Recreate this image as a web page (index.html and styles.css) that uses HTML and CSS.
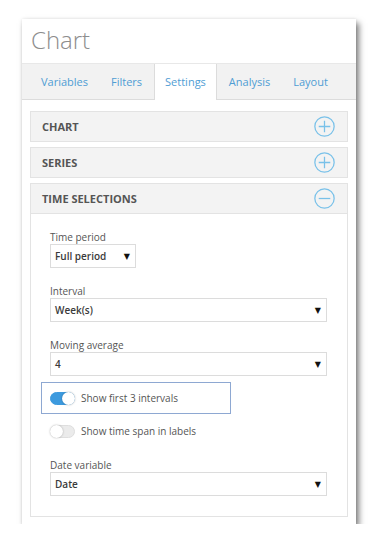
FILE: index.html
```html
<!DOCTYPE html>
<html lang="en">
<head>
    <meta charset="UTF-8">
    <meta name="viewport" content="width=device-width, initial-scale=1.0">
    <title>Chart</title>
    <link rel="stylesheet" href="styles.css">
</head>
<body>
    <div class="panel">
        <h1 class="title">Chart</h1>

        <!-- Tabs -->
        <div class="tabs">
            <div class="tab">Variables</div>
            <div class="tab">Filters</div>
            <div class="tab active">Settings</div>
            <div class="tab">Analysis</div>
            <div class="tab">Layout</div>
        </div>

        <div class="sections">
            <div class="section-head">
                <span>CHART</span>
                <svg class="toggle-icon" viewBox="0 0 20 20">
                    <circle cx="10" cy="10" r="9.2"/>
                    <path d="M10 4.5 V15.5 M4.5 10 H15.5"/>
                </svg>
            </div>
            <div class="section-head">
                <span>SERIES</span>
                <svg class="toggle-icon" viewBox="0 0 20 20">
                    <circle cx="10" cy="10" r="9.2"/>
                    <path d="M10 4.5 V15.5 M4.5 10 H15.5"/>
                </svg>
            </div>
            <div class="section-head open">
                <span>TIME SELECTIONS</span>
                <svg class="toggle-icon" viewBox="0 0 20 20">
                    <circle cx="10" cy="10" r="9.2"/>
                    <path d="M4.5 10 H15.5"/>
                </svg>
            </div>

            <div class="section-body">
                <div class="field">
                    <div class="label">Time period</div>
                    <div class="select short"><span>Full period</span><span class="arrow">&#9660;</span></div>
                </div>
                <div class="field">
                    <div class="label">Interval</div>
                    <div class="select"><span>Week(s)</span><span class="arrow">&#9660;</span></div>
                </div>
                <div class="field">
                    <div class="label">Moving average</div>
                    <div class="select"><span>4</span><span class="arrow">&#9660;</span></div>
                </div>

                <div class="switch-row highlight">
                    <span class="switch on"></span>
                    <span>Show first 3 intervals</span>
                </div>
                <div class="switch-row">
                    <span class="switch"></span>
                    <span>Show time span in labels</span>
                </div>

                <div class="field date">
                    <div class="label">Date variable</div>
                    <div class="select"><span>Date</span><span class="arrow">&#9660;</span></div>
                </div>
            </div>
        </div>
    </div>
</body>
</html>
```

FILE: styles.css
```css
body {
    margin: 0;
    font-family: "Open Sans", Arial, sans-serif;
    background-color: #fff;
}
.panel {
    margin: 19px 0 0 22px;
    width: 334px;
    padding-bottom: 7px;
    background-color: #fff;
    box-shadow: 3px 4px 6px rgba(0,0,0,0.5), 0 0 3px rgba(0,0,0,0.1);
}
.title {
    margin: 0;
    padding: 3px 9px 5px;
    font-size: 24px;
    line-height: 36px;
    font-weight: 300;
    color: #8d8d8d;
}
.tabs {
    display: flex;
    height: 35px;
    padding-left: 7.5px;
    background-color: #f2f2f2;
    border-top: 1px solid #e8e8e8;
    border-bottom: 1px solid #dcdcdc;
}
.tab {
    padding: 0 10.5px;
    font-size: 11px;
    line-height: 36px;
    color: #4f9dd4;
    border-left: 1px solid transparent;
    border-right: 1px solid transparent;
}
.tab.active {
    height: 36px;
    background-color: #fff;
    border-color: #dcdcdc;
}
.sections {
    padding: 11px 8px 0;
}
.section-head {
    display: flex;
    align-items: center;
    justify-content: space-between;
    box-sizing: border-box;
    height: 31px;
    margin-bottom: 5px;
    padding: 0 12px 0 11px;
    background-color: #f3f3f3;
    border: 1px solid #e3e3e3;
    font-size: 11px;
    font-weight: 700;
    color: #555;
}
.section-head.open {
    margin-bottom: 0;
}
.toggle-icon {
    width: 21px;
    height: 21px;
    fill: none;
    stroke: #79c1e9;
    stroke-width: 1.2;
}
.section-body {
    padding: 16px 20px 20px 19px;
    border: 1px solid #e3e3e3;
    border-top: 0;
}
.field + .field {
    margin-top: 16px;
}
.label {
    font-size: 10px;
    line-height: 14px;
    color: #555;
}
.select {
    display: flex;
    align-items: center;
    justify-content: space-between;
    box-sizing: border-box;
    height: 24px;
    padding: 0 5px 0 4px;
    border: 1px solid #dcdcdc;
    font-size: 10px;
    font-weight: 600;
    color: #3a3a3a;
}
.select.short {
    width: 86px;
}
.arrow {
    font-family: "DejaVu Sans", sans-serif;
    font-size: 8px;
    color: #111;
}
.switch-row {
    display: flex;
    align-items: center;
    gap: 6px;
    box-sizing: border-box;
    width: 190px;
    height: 32px;
    margin-left: -9px;
    padding-left: 8px;
    border: 1px solid transparent;
    font-size: 10px;
    color: #555;
}
.switch-row.highlight {
    margin-top: 6px;
    margin-bottom: 1px;
    border: 1.5px solid #8ea8d2;
}
.switch {
    position: relative;
    box-sizing: border-box;
    width: 25px;
    height: 13px;
    border-radius: 7px;
    background-color: #ebebeb;
    border: 1px solid #dedede;
}
.switch::after {
    content: "";
    position: absolute;
    top: -1px;
    left: -1px;
    width: 13px;
    height: 13px;
    border-radius: 50%;
    background-color: #fff;
    box-shadow: 0 0 2px rgba(0,0,0,0.3);
}
.switch.on {
    background-color: #3d9ade;
    border-color: #3d9ade;
}
.switch.on::after {
    left: auto;
    right: -1px;
}
.field.date {
    margin-top: 11px;
}
```
